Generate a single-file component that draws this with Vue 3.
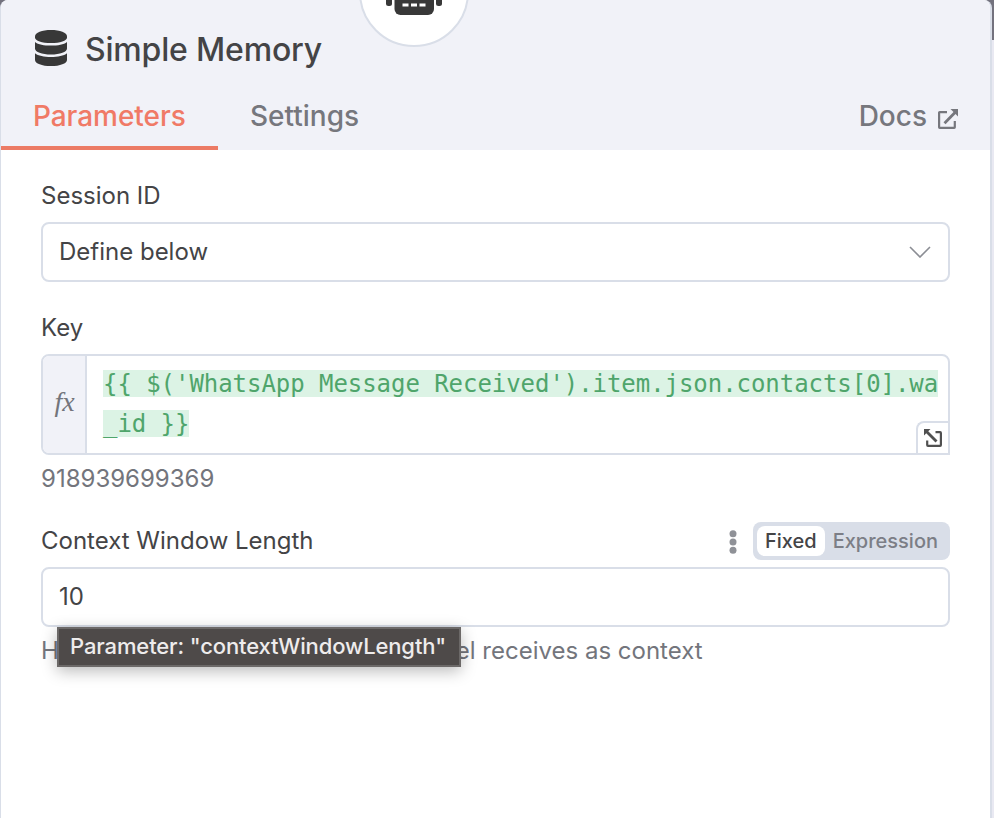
<script setup>
import { ref } from 'vue'

const title = 'Simple Memory'
const tabs = ['Parameters', 'Settings']
const activeTab = ref('Parameters')
const mode = ref('Fixed')
const expression = ["{{ $('WhatsApp Message Received').item.json.contacts[0].wa", '_id }}']
</script>

<template>
  <div class="backdrop">
    <div class="panel">
      <header class="header">
        <div class="title-row">
          <svg class="db" viewBox="0 0 32 36">
            <path d="M0 6.200C0 2.600 7 0 16 0s16 2.600 16 6.200v1.200c0 3.300-7 5.700-16 5.700s-16-2.400-16-5.700z" />
            <path d="M0 11.900c3.200 2.500 9 3.700 16 3.700s12.800-1.200 16-3.700v6.500c0 3.500-7 6-16 6s-16-2.500-16-6z" />
            <path d="M0 23.200c3.200 2.500 9 3.700 16 3.700s12.800-1.200 16-3.700v6.700C32 33.400 25 36 16 36S0 33.400 0 29.900z" />
          </svg>
          <h1 class="title">{{ title }}</h1>
        </div>
        <nav class="tabs">
          <button
            v-for="tab in tabs"
            :key="tab"
            class="tab"
            :class="{ active: tab === activeTab }"
            @click="activeTab = tab"
          >{{ tab }}</button>
          <a class="docs">
            <span>Docs</span>
            <svg class="external" viewBox="0 0 20 20">
              <path d="M9 3.200H1.700Q1.100 3.200 1.100 3.800V18.200Q1.100 18.800 1.700 18.800H16.200Q16.800 18.800 16.800 18.200V12" fill="none" stroke="currentColor" stroke-width="2.200" />
              <path d="M6.500 14.200 17.500 3" fill="none" stroke="currentColor" stroke-width="2.800" />
              <path d="M12.500 0H20v7.500z" fill="currentColor" />
            </svg>
          </a>
        </nav>
        <div class="agent">
          <svg class="robot" viewBox="0 0 56 48">
            <rect x="0" y="24" width="6" height="15" rx="2.500" />
            <rect x="50" y="24" width="6" height="15" rx="2.500" />
            <rect x="8.500" y="10" width="39.500" height="38" rx="6" />
            <path d="M16.500 36.500h6v3h-6zM25 36.500h6v3h-6zM33.500 36.500h6v3h-6z" fill="#fff" />
          </svg>
        </div>
      </header>

      <main class="body">
        <section class="field">
          <div class="label-row"><label class="label session">Session ID</label></div>
          <div class="input">
            <span class="select-value">Define below</span>
            <svg class="chevron" viewBox="0 0 22 12"><path d="M1 1 11 11 21 1" /></svg>
          </div>
        </section>

        <section class="field key-field">
          <div class="label-row"><label class="label">Key</label></div>
          <div class="expression">
            <div class="fx">fx</div>
            <div class="code">
              <div v-for="line in expression" :key="line" class="line"><span class="token">{{ line }}</span></div>
            </div>
            <div class="expand">
              <svg viewBox="0 0 18 18">
                <path d="M11.500 3.200H16.100Q16.900 3.200 16.900 4V16Q16.900 16.800 16.100 16.800H4Q3.200 16.800 3.200 16V11.500" fill="none" stroke="currentColor" stroke-width="2.200" />
                <path d="M2.500 2.500 12.500 12.500" fill="none" stroke="currentColor" stroke-width="2.800" />
                <path d="M0 0h6.500L0 6.500z" fill="currentColor" />
              </svg>
            </div>
          </div>
          <p class="result">918939699369</p>
        </section>

        <section class="field context-field">
          <div class="label-row">
            <label class="label context">Context Window Length</label>
            <div class="options">
              <svg class="dots" viewBox="0 0 8 24">
                <circle cx="4" cy="3.700" r="3.500" /><circle cx="4" cy="12" r="3.500" /><circle cx="4" cy="20.300" r="3.500" />
              </svg>
              <div class="toggle">
                <span class="choice" :class="{ on: mode === 'Fixed' }" @click="mode = 'Fixed'">Fixed</span>
                <span class="choice" :class="{ on: mode === 'Expression' }" @click="mode = 'Expression'">Expression</span>
              </div>
            </div>
          </div>
          <div class="input number">10</div>
          <p class="hint">How many past interactions the model receives as context</p>
          <div class="tooltip">Parameter: "contextWindowLength"</div>
        </section>
      </main>
    </div>
    <div class="edge"></div>
  </div>
</template>

<style>
body {
  overflow: hidden;
}
</style>

<style scoped>
* {
  box-sizing: border-box;
}
.backdrop {
  display: flex;
  width: 994px;
  height: 818px;
  background: linear-gradient(#73727e 0 40px, #e9e9f2 40px);
  font-family: Inter, "Liberation Sans", sans-serif;
  color: #444446;
}
.panel {
  width: 992px;
  height: 818px;
  background: #fff;
  border-left: 1px solid #d9dee8;
  border-right: 2px solid #d9dee8;
  border-radius: 8px 8px 0 0;
  overflow: hidden;
}
.header {
  position: relative;
  height: 150px;
  background: #f1f2f8;
  display: flex;
  flex-direction: column;
}
.title-row {
  display: flex;
  align-items: center;
  gap: 18px;
  height: 96px;
  padding-left: 34px;
}
.db {
  width: 32px;
  height: 36px;
  fill: #383838;
}
.title {
  margin: 4px 0 0;
  font-size: 32px;
  font-weight: 500;
  line-height: 40px;
  letter-spacing: -0.180px;
}
.tabs {
  display: flex;
  height: 54px;
}
.tab {
  width: 217px;
  padding: 0 0 9px 32px;
  border: 0;
  border-bottom: 4px solid transparent;
  background: none;
  font: 500 28px/41px Inter, sans-serif;
  text-align: left;
  color: #76777d;
}
.tab.active {
  color: #f07a66;
  border-bottom-color: #ec7b65;
  letter-spacing: -0.060px;
}
.docs {
  display: flex;
  margin-left: auto;
  padding-right: 32px;
  gap: 11px;
  font-size: 28px;
  font-weight: 500;
  line-height: 41px;
  color: #76777d;
}
.external {
  width: 20px;
  height: 20px;
  margin-top: 13px;
}
.agent {
  position: absolute;
  left: 358px;
  top: -63px;
  width: 110px;
  height: 110px;
  border: 2px solid #d9dee8;
  border-radius: 50%;
  background: #fff;
  display: flex;
  justify-content: center;
  padding-top: 28px;
}
.robot {
  width: 56px;
  height: 48px;
  fill: #383838;
}
.body {
  padding: 24px 40px;
}
.label-row {
  display: flex;
  align-items: center;
  justify-content: space-between;
  height: 44px;
}
.label {
  font-size: 24px;
  line-height: 32px;
}
.input {
  display: flex;
  align-items: center;
  justify-content: space-between;
  height: 60px;
  margin-top: 4px;
  padding: 0 17px 2px 16px;
  border: 2px solid #d9dee8;
  border-radius: 8px;
  background: #fff;
  font-size: 24px;
}
.chevron {
  width: 22px;
  height: 12px;
  margin-top: 2px;
  fill: none;
  stroke: #8b8d94;
  stroke-width: 1.600;
}
.key-field {
  margin-top: 24px;
}
.expression {
  position: relative;
  display: flex;
  height: 101px;
  margin-top: 4px;
  border: 2px solid #d9dee8;
  border-radius: 8px 8px 0 8px;
  overflow: hidden;
}
.fx {
  width: 44px;
  padding: 0 0 6px 1px;
  display: flex;
  align-items: center;
  justify-content: center;
  border-right: 2px solid #d9dee8;
  background: #f1f2f8;
  font: italic 28px "Liberation Serif", serif;
  color: #73757c;
}
.code {
  padding: 8px 0 0 16px;
  font: 24px/40px "DejaVu Sans Mono", monospace;
  letter-spacing: -0.050px;
  white-space: pre;
  color: #4fa56b;
}
.line {
  display: flex;
  align-items: flex-start;
  height: 40px;
}
.token {
  display: block;
  height: 27px;
  margin-top: 6px;
  line-height: 29px;
  background: #dcf3e5;
}
.expand {
  position: absolute;
  right: 0;
  bottom: 0;
  display: flex;
  width: 32px;
  height: 32px;
  padding: 6px 0 0 6px;
  border-top: 2px solid #d9dee8;
  border-left: 2px solid #d9dee8;
  border-radius: 8px 0 0 0;
  background: #fff;
  color: #505050;
}
.expand svg {
  width: 18px;
  height: 18px;
}
.result {
  margin: 8px 0 0;
  font-size: 24px;
  line-height: 32px;
  color: #73757c;
}
.context-field {
  position: relative;
  margin-top: 24px;
}
.options {
  display: flex;
  align-items: center;
  gap: 16px;
}
.dots {
  width: 8px;
  height: 24px;
  margin-top: 2px;
  fill: #8f9197;
}
.toggle {
  display: flex;
  width: 197px;
  height: 38px;
  padding: 4px;
  border-radius: 8px;
  background: #d9dee8;
}
.choice {
  padding: 0 8px;
  border-radius: 8px;
  font-size: 20px;
  font-weight: 500;
  line-height: 30px;
  color: #7c7e86;
}
.choice.on {
  background: #fff;
  color: #444446;
}
.hint {
  margin: 8px 0 0;
  font-size: 24px;
  line-height: 32px;
  white-space: nowrap;
  color: #73757c;
}
.tooltip {
  position: absolute;
  left: 16px;
  top: 108px;
  width: 404px;
  height: 40px;
  padding-left: 11px;
  border: 2px solid #6c6968;
  background: #4e4a49;
  box-shadow: 0 4px 16px rgba(0, 0, 0, 0.280);
  font-size: 22px;
  font-weight: 500;
  line-height: 35px;
  letter-spacing: -0.120px;
  white-space: nowrap;
  color: #eeecec;
}
.edge {
  width: 2px;
}
</style>
